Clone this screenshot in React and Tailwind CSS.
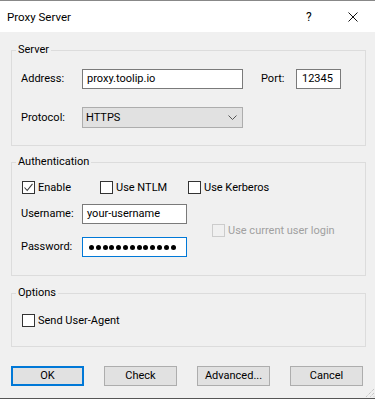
import React from 'react';

function Box({ checked, disabled, label, className = '' }) {
  return (
    <label className={'flex items-center gap-[3px] ' + className}>
      <span
        className={
          'w-[13px] h-[13px] border flex items-center justify-center shrink-0 ' +
          (disabled ? 'border-[#cccccc] bg-[#f0f0f0]' : 'border-[#333333] bg-white')
        }
      >
        {checked && (
          <svg width="11" height="11" viewBox="0 0 11 11" fill="none">
            <path d="M1.5 5.5 L4.2 8.5 L9.5 1.8" stroke="#3c3c3c" strokeWidth="1.1" />
          </svg>
        )}
      </span>
      <span className={disabled ? 'text-[#a0a0a0]' : ''}>{label}</span>
    </label>
  );
}

function Group({ title, className = '', children }) {
  return (
    <fieldset className={'w-[355px] border border-[#dcdcdc] ' + className}>
      <legend className="ml-[4px] px-[2px] leading-[16px]">{title}</legend>
      {children}
    </fieldset>
  );
}

function Button({ children, primary }) {
  return (
    <button
      className={
        'w-[73px] h-[20px] bg-[#e1e1e1] flex items-center justify-center leading-[16px] ' +
        (primary ? 'border-2 border-[#0078d7]' : 'border border-[#adadad]')
      }
    >
      {children}
    </button>
  );
}

export default function App() {
  return (
    <div className="w-[375px] h-[399px] relative flex flex-col bg-[#f0f0f0] border-t border-t-[#888888] border-b border-b-[#555555] font-['Roboto',sans-serif] text-[11px] leading-[16px] text-black">
      {/* title bar */}
      <div className="h-[31px] bg-white flex items-center pl-[7px] shrink-0 text-[11.5px]">
        <span className="flex-1">Proxy Server</span>
        <span className="w-[10px] mr-[32px] text-[12px]">?</span>
        <svg className="mr-[17px]" width="10" height="10" viewBox="0 0 10 10">
          <path d="M0.5 0.5 L9.5 9.5 M9.5 0.5 L0.5 9.5" stroke="#111" strokeWidth="1" />
        </svg>
      </div>

      <div className="flex-1 flex flex-col pl-[11px] pt-[10px]">
        <Group title="Server">
          <div className="pl-[9px] pt-[11px] pb-[17px]">
            <div className="flex items-center h-[20px]">
              <span className="w-[61px]">Address:</span>
              <div className="w-[161px] h-[20px] bg-white border border-[#7a7a7a] flex items-center pl-[4px]">
                proxy.toolip.io
              </div>
              <span className="ml-[18px] w-[35px]">Port:</span>
              <div className="w-[45px] h-[20px] bg-white border border-[#7a7a7a] flex items-center pl-[5px]">
                12345
              </div>
            </div>
            <div className="flex items-center h-[21px] mt-[18px]">
              <span className="w-[61px]">Protocol:</span>
              <div className="w-[161px] h-[21px] bg-[#e1e1e1] border border-[#adadad] flex items-center pl-[3px] pr-[5px]">
                <span className="flex-1">HTTPS</span>
                <svg width="9" height="6" viewBox="0 0 9 6" fill="none">
                  <path d="M0.5 0.5 L4.5 4.5 L8.5 0.5" stroke="#555" strokeWidth="1" />
                </svg>
              </div>
            </div>
          </div>
        </Group>

        <Group title="Authentication" className="mt-[8px]">
          <div className="pl-[9px] pt-[11px] pb-[18px]">
            <div className="flex h-[13px] items-center pl-[1px]">
              <Box checked label="Enable" className="w-[78px]" />
              <Box label="Use NTLM" className="w-[88px]" />
              <Box label="Use Kerberos" />
            </div>
            <div className="flex mt-[10px]">
              <div className="flex flex-col gap-[13px]">
                <div className="flex items-center h-[20px]">
                  <span className="w-[61px]">Username:</span>
                  <div className="w-[105px] h-[20px] bg-white border border-[#7a7a7a] flex items-center pl-[4px]">
                    your-username
                  </div>
                </div>
                <div className="flex items-center h-[20px]">
                  <span className="w-[61px]">Password:</span>
                  <div className="w-[105px] h-[20px] bg-white border border-[#0078d7] flex items-center pl-[6px] gap-[1.8px]">
                    {Array.from({ length: 13 }).map((_, i) => (
                      <span key={i} className="w-[5px] h-[5px] rounded-full bg-black" />
                    ))}
                  </div>
                </div>
              </div>
              <Box disabled label="Use current user login" className="self-center ml-[25px]" />
            </div>
          </div>
        </Group>

        <Group title="Options" className="mt-[9px]">
          <div className="pl-[10px] pt-[13px] pb-[19px]">
            <Box label="Send User-Agent" className="h-[13px]" />
          </div>
        </Group>

        <div className="flex gap-[20px] mt-[19px]">
          <Button primary>OK</Button>
          <Button>Check</Button>
          <Button>Advanced...</Button>
          <Button>Cancel</Button>
        </div>
      </div>

      {/* resize grip */}
      <svg className="absolute right-0 bottom-0" width="11" height="11" viewBox="0 0 11 11">
        <path d="M10 2 L2 10 M10 6 L6 10 M10 9.5 L9.5 10" stroke="#b4b4b4" strokeWidth="1" strokeDasharray="1 1" />
      </svg>
    </div>
  );
}
